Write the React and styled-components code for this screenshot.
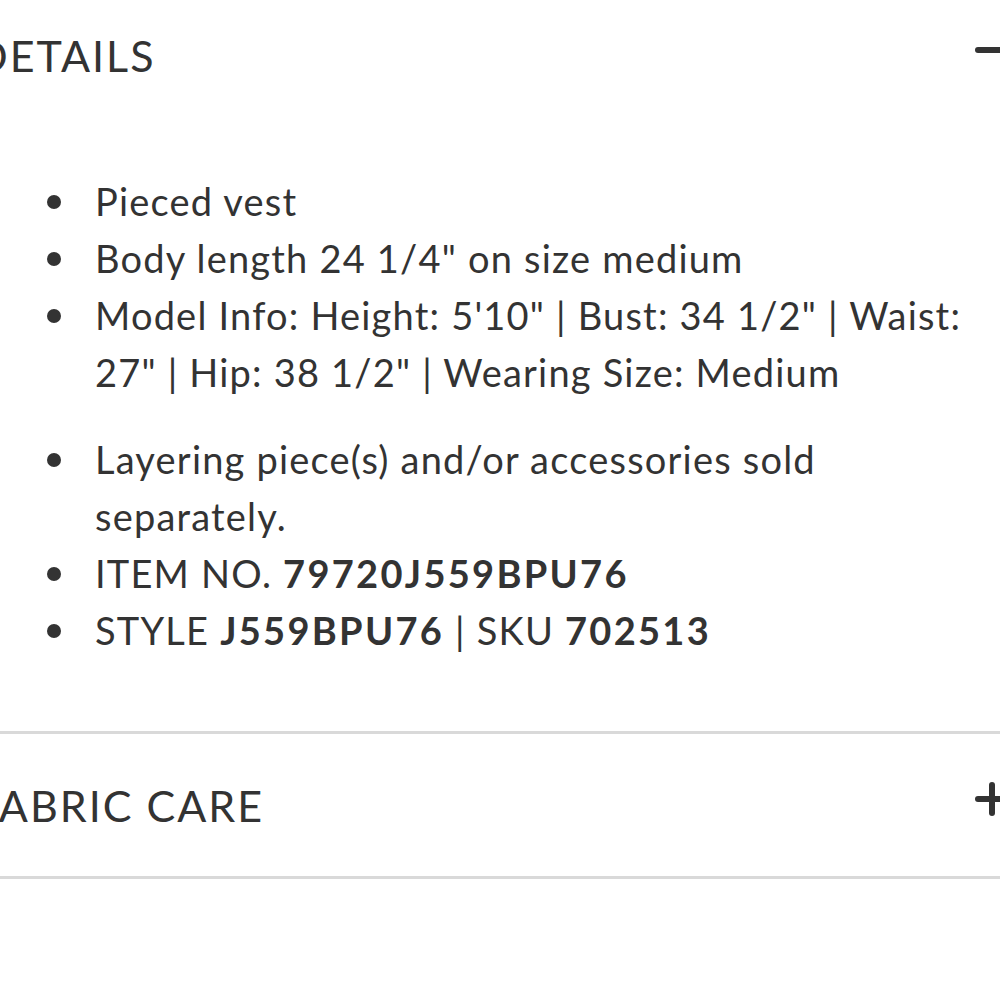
import React from 'react';
import styled, { createGlobalStyle } from 'styled-components';

const GlobalStyle = createGlobalStyle`
  html, body {
    margin: 0;
    padding: 0;
    background: #ffffff;
  }
  body {
    font-family: Lato, "Noto Sans", "Liberation Sans", sans-serif;
    color: #333333;
  }
`;

const ToggleIcon = ({ open }) => (
  <Icon viewBox="0 0 34 34" aria-hidden="true">
    <line x1="3" y1="17" x2="31" y2="17" />
    {!open && <line x1="17" y1="3" x2="17" y2="31" />}
  </Icon>
);

const App = () => {
  return (
    <Page>
      <GlobalStyle />
      <Accordion>
        <Section>
          <Header $first>
            <HeaderTitle>DETAILS</HeaderTitle>
            <ToggleIcon open />
          </Header>
          <Panel>
            <List>
              {details.map((item) => (
                <Item key={item.id} $spaced={item.spaced}>
                  {item.content}
                </Item>
              ))}
            </List>
          </Panel>
        </Section>
        <Section>
          <Header>
            <HeaderTitle>FABRIC CARE</HeaderTitle>
            <ToggleIcon />
          </Header>
        </Section>
      </Accordion>
    </Page>
  );
};

export default App;

const Page = styled.div`
  width: 1000px;
  height: 1000px;
  overflow: hidden;
`;

const Accordion = styled.div`
  margin: -14px -9px 0 -25px;
`;

const Section = styled.section`
  border-bottom: 3px solid #d9d9d9;
`;

const Header = styled.div`
  display: flex;
  align-items: center;
  justify-content: space-between;
  height: ${({ $first }) => ($first ? '139px' : '142px')};
`;

const HeaderTitle = styled.h2`
  margin: 0;
  font-size: 43px;
  font-weight: 400;
  letter-spacing: 2px;
  color: #333333;
`;

const Icon = styled.svg`
  width: 34px;
  height: 34px;
  flex-shrink: 0;
  margin-top: -12px;
  stroke: #333333;
  stroke-width: 6;
  stroke-linecap: round;
  fill: none;
`;

const Panel = styled.div`
  padding: 48px 32px 72px 72px;
`;

const List = styled.ul`
  list-style: none;
  margin: 0;
  padding: 0;
`;

const Item = styled.li`
  position: relative;
  padding-left: 48px;
  font-size: 38px;
  letter-spacing: 1.2px;
  line-height: 57px;
  margin-bottom: ${({ $spaced }) => ($spaced ? '30px' : '0')};

  &::before {
    content: '';
    position: absolute;
    left: 0;
    top: 22px;
    width: 14px;
    height: 14px;
    border-radius: 50%;
    background: #333333;
  }
`;

const Strong = styled.strong`
  font-weight: 700;
  letter-spacing: 2.3px;
`;

const details = [
  { id: 1, content: <>Pieced vest</> },
  { id: 2, content: <>Body length 24 1/4" on size medium</> },
  {
    id: 3,
    spaced: true,
    content: <>Model Info: Height: 5'10" | Bust: 34 1/2" | Waist: 27" | Hip: 38 1/2" | Wearing Size: Medium</>,
  },
  { id: 4, content: <>Layering piece(s) and/or accessories sold separately.</> },
  { id: 5, content: <>ITEM NO. <Strong>79720J559BPU76</Strong></> },
  { id: 6, content: <>STYLE <Strong>J559BPU76</Strong> | SKU <Strong>702513</Strong></> },
];
